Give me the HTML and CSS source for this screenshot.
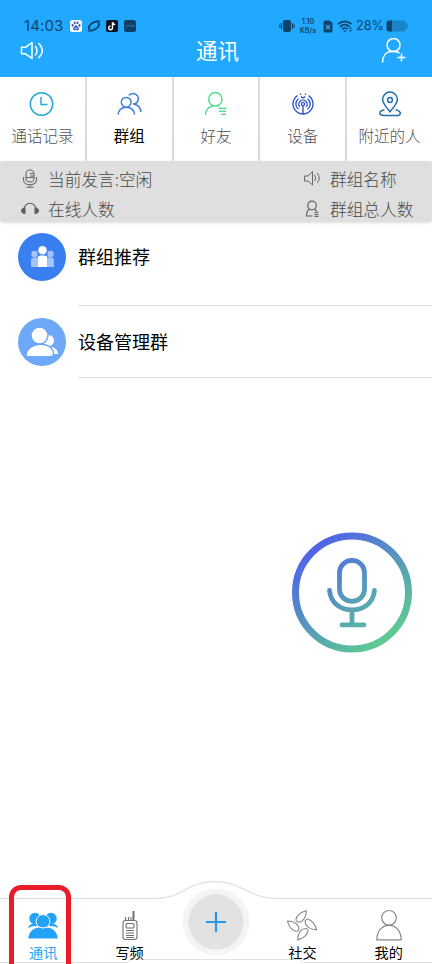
FILE: index.html
```html
<!DOCTYPE html>
<html lang="zh-CN">
<head>
<meta charset="utf-8">
<title>通讯</title>
<link rel="stylesheet" href="styles.css">
</head>
<body>
<div class="phone">
  <header class="header">
    <div class="status">
      <span class="time">14:03</span>
      <svg class="apps" width="68" height="14" viewBox="0 0 68 14">
        <rect x="1" y="1" width="12" height="12" rx="2.5" fill="#fff"/>
        <g fill="#3458b8"><ellipse cx="3.6" cy="6.3" rx="1" ry="1.4"/><ellipse cx="5.7" cy="3.9" rx="1" ry="1.4"/><ellipse cx="8.5" cy="3.9" rx="1" ry="1.4"/><ellipse cx="10.5" cy="6.5" rx="1" ry="1.4"/><path d="M7 6.2c-1 0-1.400 1-2.300 2s-1 3 .8 3h3c1.800 0 1.700-2 .8-3S8 6.200 7 6.200z"/></g>
        <path d="M6 8.300v1.700h2V8.300" fill="none" stroke="#fff" stroke-width=".6"/>
        <path d="M20.300 10C18.500 7 24 2 29.500 2.200M29.700 4c1.800 3-3.700 8-9.200 7.800" fill="none" stroke="#0c456f" stroke-width="1.900"/>
        <path d="M19 12.300l2-2.300M29 4l2-2.300" stroke="#0c456f" stroke-width="1.100"/>
        <rect x="37" y="1" width="12" height="12" rx="2" fill="#081525"/>
        <path d="M43.500 3v5.800a1.900 1.900 0 1 1-1.900-1.900M43.500 3.200c.2 1.500 1.200 2.300 2.700 2.400" fill="none" stroke="#fff" stroke-width="1.400"/>
        <rect x="55" y="1" width="12" height="12" rx="2.500" fill="#0d4064"/>
        <path d="M56.700 6l1 1.600 1-1.600M59.700 6v1.600M60.700 6l1 1.600 1-1.600M63.700 6h1.500v1.500h-1.500z" fill="none" stroke="#3a87ba" stroke-width=".6"/>
      </svg>
      <span class="spacer"></span>
      <svg width="16" height="14" viewBox="0 0 16 14"><rect x="4" y="1" width="8" height="12" rx="2" fill="#0d456e"/><path d="M2.500 4v6M13.500 4v6M.8 5.500v3M15.200 5.500v3" stroke="#0d456e" stroke-width="1.200"/></svg>
      <span class="speed"><b>1.10</b><b>KB/s</b></span>
      <svg class="sim" width="10" height="13" viewBox="0 0 10 13"><path d="M2 .5h4.500L9.500 3v8a1.500 1.500 0 0 1-1.500 1.500H2A1.500 1.500 0 0 1 .5 11V2A1.500 1.500 0 0 1 2 .5z" fill="#0d456e"/><path d="M3 5l4 4M7 5L3 9" stroke="#39a8ed" stroke-width="1.200"/></svg>
      <svg class="wifi" width="16" height="13" viewBox="0 0 16 13"><path d="M1 4.200c4-3.800 9.500-3.800 13.500 0M3 6.800c3-2.700 6.500-2.700 9.500 0M5 9.200c1.800-1.600 3.700-1.600 5.500 0" fill="none" stroke="#0d456e" stroke-width="1.600"/><path d="M6 10.500h3.500L7.800 12.300zM12 8.700l1.500-1.700L15 8.700zM12 10l1.500 1.800L15 10z" fill="#0d456e"/></svg>
      <span class="percent">28%</span>
      <svg class="battery" width="22" height="12" viewBox="0 0 22 12"><rect x=".5" y=".5" width="19.500" height="11" rx="3" fill="#1b83c8"/><path d="M6 .5H3.500a3 3 0 0 0-3 3v5a3 3 0 0 0 3 3H6z" fill="#0d456e"/><rect x="20.300" y="3.500" width="1.500" height="5" rx=".7" fill="#1b83c8"/></svg>
    </div>
    <div class="titlebar">
      <svg width="24" height="20" viewBox="0 0 24 20" fill="none" stroke="#fff" stroke-width="1.500" stroke-linejoin="round" stroke-linecap="round"><path d="M1.500 6.300h4L12 1.500v16l-6.500-4.700h-4zM15.500 5.500q3 4 0 8.500M18.800 2.500q7 7 0 14"/></svg>
      <h1>通讯</h1>
      <svg width="26" height="26" viewBox="0 0 26 26" fill="none" stroke="#fff" stroke-width="1.500"><circle cx="13.500" cy="7" r="6.500"/><path d="M2.500 24.500C2.500 18 6 13.700 11.500 13.500h3q3 .2 5 1.700M21.500 15.500v8M17.500 19.500h8"/></svg>
    </div>
  </header>

  <nav class="tabs">
    <a class="tab"><svg width="28" height="28" viewBox="0 0 28 28" fill="none" stroke="#20a9d9" stroke-width="1.500"><circle cx="13.500" cy="14" r="11.200"/><path d="M13 7v7.500h6.500"/></svg><span>通话记录</span></a>
    <a class="tab active"><svg width="28" height="28" viewBox="0 0 28 28" fill="none" stroke="#3d7ed9" stroke-width="1.500"><circle cx="11.200" cy="12.300" r="4.900"/><path d="M3 24.500c.7-4.500 3.600-7.200 8.300-7.200s7.700 2.700 8.300 7.200M13.800 5.300c4.200-4 10.500-.5 9.300 4.700-.6 2.500-2.500 4-5.100 4M19 14.300c3.700.5 6.400 3.400 7 7.700"/></svg><span>群组</span></a>
    <a class="tab"><svg width="28" height="28" viewBox="0 0 28 28" fill="none" stroke="#58dc98" stroke-width="1.500"><circle cx="13.300" cy="9.300" r="6.700"/><path d="M3.500 25c.3-5.500 3.300-8.700 8-9M14.500 15.500l2.500.4M16.500 18.300h8M17 21.300h7M19 24.300h5"/></svg><span>好友</span></a>
    <a class="tab"><svg width="28" height="28" viewBox="0 0 28 28" fill="none" stroke="#3257d0" stroke-width="1.400"><path d="M8.500 5.600a10 10 0 1 0 11 0M9.500 8.700a6.600 6.600 0 0 0 0 10.600M18.500 8.700a6.600 6.600 0 0 1 0 10.600M10.800 17a4.200 4.200 0 1 1 6.400 0M14 15.500V24"/><circle cx="14" cy="14" r="1.600"/><path d="M12 6.500q2 2.600 4 0M11.500 5V3.600M16.500 5V3.600"/></svg><span>设备</span></a>
    <a class="tab"><svg width="28" height="28" viewBox="0 0 28 28" fill="none" stroke="#1f6faa" stroke-width="1.500"><path d="M14 21.800C10 17 6.600 13.300 6.600 9.500a7.400 7.400 0 0 1 14.800 0c0 3.800-3.400 7.500-7.400 12.300z"/><circle cx="14" cy="10" r="2.400"/><path d="M8.500 19.700C2 21 2.500 25.500 8 25.500h12.500c5.500 0 5-4.500-1-5.800"/></svg><span>附近的人</span></a>
  </nav>

  <section class="info">
    <div class="cell"><svg width="20" height="20" viewBox="0 0 20 20" fill="none" stroke="#666" stroke-width="1.100"><rect x="6" y="1" width="8" height="12" rx="3.800"/><path d="M3.500 8v2.500c0 7 13 7 13 0V8M10 15.500v2.700M6.500 18.300h7M10 4.500h4M10 7h4M6 8.500h8"/></svg><span>当前发言:空闲</span></div>
    <div class="cell"><svg width="20" height="20" viewBox="0 0 20 20" fill="none" stroke="#666" stroke-width="1"><path d="M2.500 7H6L10.500 2.500v13.500L6 12H2.500zM12.500 6q2.500 3 0 6M15 4q4.500 5 0 10"/></svg><span>群组名称</span></div>
    <div class="cell"><svg width="20" height="20" viewBox="0 0 20 20"><path d="M4 11C4 2 16 2 16 11" fill="none" stroke="#666" stroke-width="1.200"/><path d="M5.500 8.500v6.500C2.500 15 1 13.700 1 11.800s1.500-3.300 4.500-3.300zM14.500 8.500v6.500c3 0 4.500-1.300 4.500-3.200s-1.500-3.300-4.500-3.300z" fill="#5f5f5f"/></svg><span>在线人数</span></div>
    <div class="cell"><svg width="20" height="20" viewBox="0 0 20 20" fill="none" stroke="#666" stroke-width="1.200"><circle cx="10" cy="6.500" r="4.300"/><path d="M7.500 10C5 11.500 4.500 14 4.500 17h6M12.500 10l2.500 2.500M12.500 13.500h4M12.500 15.500h4M12.500 17.300h4"/></svg><span>群组总人数</span></div>
  </section>

  <main class="list">
    <div class="row first">
      <svg width="48" height="48" viewBox="0 0 48 48"><circle cx="24" cy="24" r="24" fill="#3a7ff0"/><g fill="#a4c4fb"><circle cx="16.500" cy="21" r="3.200"/><circle cx="32.500" cy="21" r="3.200"/><path d="M13 34v-6.500q0-3 3-3h3V34zM36 34v-6.500q0-3-3-3h-3V34z"/></g><circle cx="24.500" cy="17.300" r="4.300" fill="#fff"/><path d="M19.500 34v-8.500q0-3 3-3h4q3 0 3 3V34z" fill="#fff"/></svg>
      <span class="name">群组推荐</span>
    </div>
    <div class="row second">
      <svg width="48" height="48" viewBox="0 0 48 48"><circle cx="24" cy="24" r="24" fill="#6ea8f8"/><circle cx="30.500" cy="22.500" r="5.500" fill="#fff"/><path d="M31 28.500c6 0 9 4 9 7.500H31z" fill="#fff"/><g fill="#fff" stroke="#6ea8f8" stroke-width="1.400"><circle cx="21.500" cy="17.500" r="8.500"/><path d="M8 38.700C8 22.500 35.500 22.500 35.500 36q0 2.700-3 2.700z"/></g></svg>
      <span class="name">设备管理群</span>
    </div>
  </main>

  <svg class="talk" width="120" height="121" viewBox="0 0 120 121" fill="none">
    <defs><linearGradient id="blend" gradientUnits="userSpaceOnUse" x1="20" y1="15" x2="92" y2="110"><stop offset="0" stop-color="#5063e8"/><stop offset="1" stop-color="#5dcb92"/></linearGradient></defs>
    <g stroke="url(#blend)" stroke-width="4.800" stroke-linecap="round"><circle cx="60" cy="60.500" r="56.500" stroke-width="7"/><rect x="47.500" y="28.400" width="25" height="41" rx="12.500"/><path d="M37.500 58.400c2 26 43 26 45 0M60 78.400v14.500M50 92.900h22"/></g>
  </svg>

  <footer class="bottom">
    <svg class="edge" width="432" height="86" viewBox="0 0 432 86" fill="none" stroke="#e2e2e2"><path d="M0 20.500H154C184 20.500 186 3.500 215 3.500S246 20.500 278 20.500H432" stroke-width="1.300"/><path d="M0 84.500H127l4-3H300l4 3H432"/></svg>
    <a class="item active"><svg width="32" height="32" viewBox="0 0 32 32" fill="#23a3f6"><circle cx="8" cy="9.500" r="5.700"/><circle cx="24" cy="9.500" r="5.700"/><path d="M1 19c1-3.500 4-4.500 7-4.500h16c3 0 6 1 7 4.500q-3-2-7-2H8q-4 0-7 2z"/><g stroke="#fff"><circle cx="16" cy="12.500" r="6.900"/><path d="M.8 30C1 23 6 18.500 12 18q4 2.200 8 0c6 .5 11 5 11.200 12z"/></g></svg><span>通讯</span></a>
    <a class="item"><svg width="32" height="32" viewBox="0 0 32 32" fill="none" stroke="#707070" stroke-width="1.100"><rect x="9" y="11.500" width="14" height="19" rx="2.500"/><rect x="12" y="14.500" width="8" height="4.500" rx="1"/><path d="M12 21.500h8M12 24h8M12 26.500h8M12 28.500h8M11.500 11V8M14.500 11V8M17 11V8"/><path d="M19.500 11V2" stroke-width="2"/></svg><span>写频</span></a>
    <a class="add"><svg width="68" height="68" viewBox="0 0 68 68"><circle cx="34" cy="34" r="33.500" fill="#f4f4f4"/><circle cx="34" cy="34" r="27.500" fill="#e2e2e2"/><path d="M34 24v20M24 34h20" stroke="#2b98e5" stroke-width="2.200"/></svg></a>
    <a class="item"><svg width="32" height="32" viewBox="0 0 32 32" fill="none" stroke="#888" stroke-width="1.100"><path id="petal" d="M20.300 1.700C15 2.800 10.300 7 10 10.500 9.800 14 14.500 14 17.300 10.800 19.500 8.200 20.300 5 20.300 1.700z"/><use href="#petal" transform="rotate(90 16 16.300)"/><use href="#petal" transform="rotate(180 16 16.300)"/><use href="#petal" transform="rotate(270 16 16.300)"/></svg><span>社交</span></a>
    <a class="item"><svg width="32" height="32" viewBox="0 0 32 32" fill="none" stroke="#888" stroke-width="1.200"><circle cx="16" cy="8.800" r="7.300"/><path d="M3.800 30.800C4 22.300 8.500 16.300 16 16.300s12 6 12.200 14.500z"/></svg><span>我的</span></a>
    <div class="highlight"></div>
  </footer>
</div>
</body>
</html>
```
FILE: styles.css
```css
* { box-sizing: border-box; }
body { margin: 0; background: #fff; font-family: "Noto Sans CJK SC", sans-serif; }
svg { display: block; flex: none; }
.phone { position: relative; width: 432px; height: 964px; overflow: hidden; display: flex; flex-direction: column; }

.header { height: 77px; flex: none; background: #21a8ff; padding-top: 16px; }
.status { height: 20px; display: flex; align-items: center; padding: 0 24px; color: #10466d; font-family: Inter, "Noto Sans", sans-serif; }
.time { width: 39px; font-size: 15px; line-height: 18px; letter-spacing: .1px; white-space: nowrap; }
.apps { margin-left: 6px; }
.spacer { flex: 1; }
.speed { width: 18px; margin-left: 4px; display: flex; flex-direction: column; align-items: center; font-size: 7.200px; line-height: 9px; }
.speed b { font-weight: 600; }
.sim { margin-left: 6px; }
.wifi { margin-left: 4px; }
.percent { width: 27px; margin-left: 3px; font-size: 12.700px; line-height: 18px; white-space: nowrap; }
.battery { margin-left: 3px; }
.titlebar { height: 30px; padding: 0 26px 0 20px; display: grid; grid-template-columns: 24px 1fr 26px; align-items: center; }
.titlebar h1 { margin: 0; padding: 0 0 2px 11px; color: #fff; font-size: 21.500px; line-height: 28px; font-weight: 400; text-align: center; }

.tabs { height: 84px; flex: none; display: grid; grid-template-columns: repeat(5, 1fr); gap: 2px; background: linear-gradient(#d9dce2, #d9d9d9); }
.tab { background: #fff; display: flex; flex-direction: column; align-items: center; padding-top: 13px; color: #505050; font-size: 15.500px; font-weight: 300; line-height: 22px; white-space: nowrap; }
.tab span { margin-top: 6px; }
.tab.active { color: #000; font-weight: 400; }

.info { height: 61px; flex: none; padding: 3px 0 0 20px; display: grid; grid-template-columns: 282px 1fr; grid-auto-rows: 30px; background: #dfdfdf; border-radius: 3px; box-shadow: 0 1px 3px #ddd; color: #484848; font-size: 16.700px; font-weight: 300; }
.cell { display: flex; align-items: center; gap: 8px; line-height: 28px; white-space: nowrap; }

.list { flex: 1; }
.row { display: flex; align-items: flex-start; padding: 11px 0 0 18px; position: relative; }
.row::after { content: ""; position: absolute; left: 78px; right: 0; bottom: 0; height: 1px; background: #dedede; }
.first { height: 84px; }
.second { height: 72px; padding-top: 12px; }
.name { margin-left: 12px; font-size: 18px; line-height: 46px; color: #000; }

.talk { position: absolute; left: 292px; top: 532px; }

.bottom { height: 86px; flex: none; position: relative; display: grid; grid-template-columns: repeat(5, 1fr); }
.edge { position: absolute; left: 0; top: 0; }
.item { position: relative; display: flex; flex-direction: column; align-items: center; padding-top: 31px; color: #000; font-size: 14.200px; line-height: 20px; }
.item span { margin-top: 1px; }
.item.active { color: #23a3f6; }
.add { position: relative; display: flex; justify-content: center; padding-top: 10px; }
.highlight { position: absolute; left: 9px; top: 7px; width: 62px; height: 90px; border: 5px solid #e71d29; border-radius: 12px; }
```
